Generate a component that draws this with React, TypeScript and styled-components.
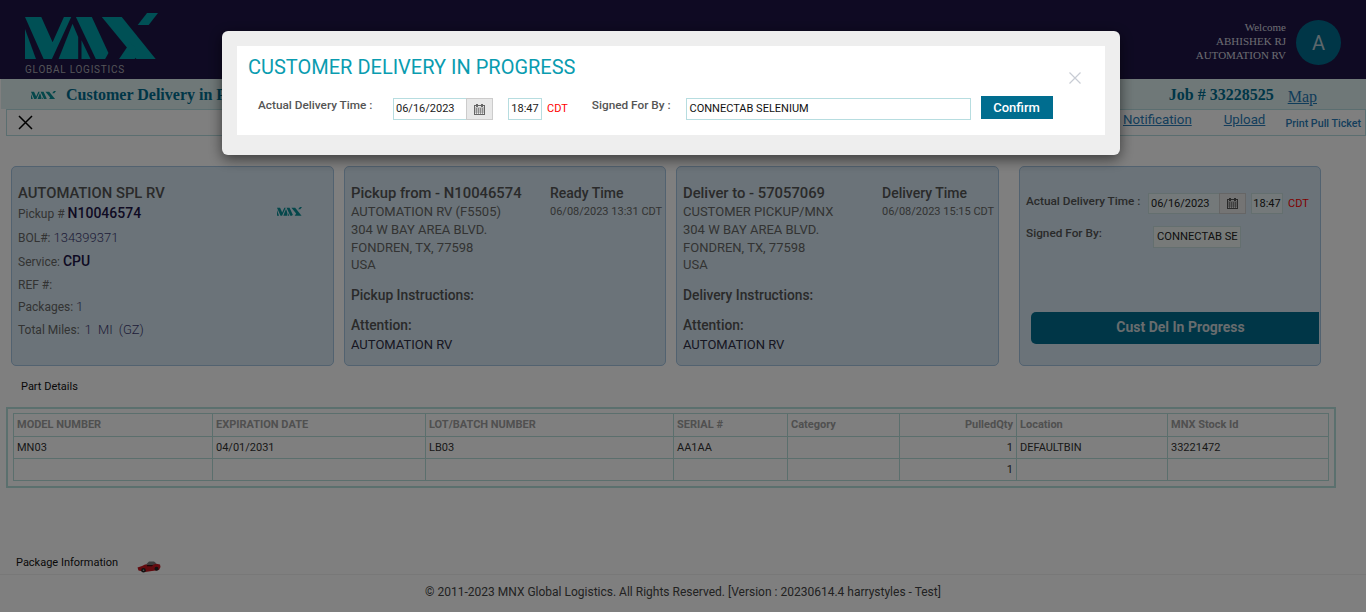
import styled, { createGlobalStyle } from "styled-components";

const GlobalStyle = createGlobalStyle`
  html, body {
    margin: 0;
    padding: 0;
    height: 100%;
    overflow: hidden;
    background: #fff;
    font-family: Roboto, "Liberation Sans", sans-serif;
  }
  * { box-sizing: border-box; }
`;

const Page = styled.div`
  width: 1366px;
  height: 612px;
  display: flex;
  flex-direction: column;
  overflow: hidden;
`;

const TopBar = styled.header`
  height: 79px;
  background: #1e1546;
  display: flex;
  flex: none;
`;

const LogoBox = styled.div`
  width: 240px;
  padding: 13px 0 0 25px;
`;

const LogoSub = styled.div`
  font-size: 10px;
  line-height: 10px;
  letter-spacing: 0.75px;
  color: #a8a8b0;
  margin-top: 5px;
`;

const Nav = styled.nav`
  width: 600px;
  display: flex;
  padding-top: 28px;
  gap: 40px;
  font-size: 15px;
  color: #ddd;
`;

const UserBox = styled.div`
  margin-left: auto;
  display: flex;
  align-items: center;
  padding: 0 25px 0 0;
  gap: 10px;
  height: 85px;
`;

const UserText = styled.div`
  text-align: right;
  font-family: "Liberation Serif", serif;
  font-size: 11px;
  line-height: 14px;
  color: #d8d8e0;
  margin-top: -4px;
`;

const Avatar = styled.div`
  width: 45px;
  height: 45px;
  border-radius: 50%;
  background: #006d8f;
  color: #b9cfd8;
  display: flex;
  align-items: center;
  justify-content: center;
  font-size: 20px;
`;

const TitleBar = styled.div`
  height: 30px;
  flex: none;
  margin-left: 1px;
  background: #dff0f0;
  display: flex;
  align-items: center;
  padding: 2px 49px 0 30px;
`;

const PageTitle = styled.div`
  font-family: "Liberation Serif", serif;
  font-weight: bold;
  font-size: 16px;
  color: #006d8f;
  margin-left: 10px;
`;

const JobNumber = styled.div`
  margin-left: auto;
  font-family: "Liberation Serif", serif;
  font-weight: bold;
  font-size: 16px;
  color: #006d8f;
`;

const MapLink = styled.a`
  margin-left: 14px;
  font-family: "Liberation Serif", serif;
  font-size: 16px;
  color: #1f78b4;
  text-decoration: underline;
  padding-top: 3px;
`;

const ActionBar = styled.div`
  height: 27px;
  flex: none;
  margin-left: 6px;
  border: 1px solid #b7dde0;
  display: flex;
  align-items: center;
  padding-left: 11px;
`;

const ActionLink = styled.a<{ $gap: number }>`
  margin-left: ${(p) => p.$gap}px;
  font-size: 13.3px;
  color: #2a7db8;
  text-decoration: underline;
  margin-top: -6px;
`;

const PrintLink = styled.a`
  margin-left: 20px;
  margin-top: 1px;
  font-size: 10.7px;
  font-weight: 500;
  color: #2a7db8;
`;

const CardRow = styled.div`
  display: flex;
  gap: 10px;
  padding: 30px 0 0 11px;
  flex: none;
`;

const Card = styled.section<{ $w: number; $ml?: number }>`
  width: ${(p) => p.$w}px;
  margin-left: ${(p) => p.$ml ?? 0}px;
  height: 200px;
  background: #d6e6f2;
  border: 1px solid #a4c4e0;
  border-radius: 5px;
  padding: 18px 5px 0 6px;
  color: #444;
  position: relative;
`;

const CardHead = styled.div`
  font-size: 14.8px;
  line-height: 17px;
  font-weight: 500;
  color: #555;
  margin-bottom: 1px;
`;

const TimeHead = styled.div`
  font-size: 14px;
  line-height: 17px;
  font-weight: 500;
  color: #555;
  margin-bottom: 1px;
`;

const InfoList = styled.div`
  padding-top: 3px;
`;

const InfoLine = styled.div<{ $mb?: number }>`
  font-size: 12px;
  line-height: 14px;
  margin-bottom: ${(p) => p.$mb ?? 9}px;
  color: #666;
`;

const Strong = styled.span`
  font-size: 14px;
  font-weight: 500;
  color: #1e1546;
`;

const Plain = styled.span`
  font-size: 13px;
  font-weight: 300;
  color: #3c3a70;
`;

const MilesValue = styled.span`
  font-size: 13px;
  font-weight: 300;
  color: #3c3a70;
  margin-left: 2px;
  word-spacing: 3px;
`;

const SmallLogo = styled.div`
  position: absolute;
  top: 40px;
  left: 265px;
  line-height: 0;
`;

const SplitRow = styled.div`
  display: flex;
`;

const AddressCol = styled.div`
  flex: 1;
`;

const TimeCol = styled.div<{ $w: number }>`
  width: ${(p) => p.$w}px;
`;

const AddressLine = styled.div`
  font-size: 13px;
  line-height: 17.8px;
  color: #666;
`;

const TimeValue = styled.div`
  font-size: 11px;
  line-height: 18px;
  color: #666;
  white-space: nowrap;
`;

const SubHead = styled.div<{ $mt: number }>`
  font-size: 13.8px;
  line-height: 16px;
  font-weight: 500;
  color: #555;
  margin-top: ${(p) => p.$mt}px;
`;

const DarkLine = styled.div`
  font-size: 13px;
  line-height: 18px;
  color: #2e2e44;
  margin-top: 3px;
`;

const FormRow = styled.div<{ $mt?: number }>`
  display: flex;
  align-items: flex-start;
  margin-top: ${(p) => p.$mt ?? 0}px;
`;

const FieldLabel = styled.label<{ $w?: number; $mt?: number }>`
  font-size: 11.8px;
  line-height: 14px;
  font-weight: 500;
  color: #555;
  white-space: nowrap;
  width: ${(p) => (p.$w ? `${p.$w}px` : "auto")};
  margin-top: ${(p) => p.$mt ?? 0}px;
`;

const DateField = styled.div<{ $border: string; $bg: string; $w: number; $h: number }>`
  width: ${(p) => p.$w}px;
  height: ${(p) => p.$h}px;
  border: 1px solid ${(p) => p.$border};
  display: flex;
  font-size: 11px;
  line-height: ${(p) => p.$h - 2}px;
  color: #222;
  background: ${(p) => p.$bg};
`;

const DateText = styled.span`
  flex: 1;
  padding-left: 2px;
`;

const DateIcon = styled.span`
  width: 27px;
  margin: -1px -1px -1px 0;
  background: #e8e8e8;
  border: 1px solid #ccc;
  display: flex;
  align-items: center;
  justify-content: center;
`;

const TimeField = styled.div<{ $border: string; $bg: string; $w: number; $h: number; $ml: number }>`
  width: ${(p) => p.$w}px;
  height: ${(p) => p.$h}px;
  margin-left: ${(p) => p.$ml}px;
  border: 1px solid ${(p) => p.$border};
  font-size: 11px;
  line-height: ${(p) => p.$h - 2}px;
  text-align: center;
  color: #222;
  background: ${(p) => p.$bg};
`;

const ZoneText = styled.span<{ $mr?: number }>`
  font-size: 11px;
  line-height: 22px;
  color: #f00;
  margin: 0 ${(p) => p.$mr ?? 0}px 0 5px;
`;

const SignedField = styled.div`
  width: 88px;
  height: 22px;
  border: 1px solid #c8dede;
  background: #eef4f2;
  font-size: 11.2px;
  line-height: 20px;
  padding-left: 3px;
  overflow: hidden;
  white-space: nowrap;
  color: #222;
`;

const StatusButton = styled.button`
  position: absolute;
  left: 11px;
  top: 145px;
  width: 288px;
  height: 32px;
  border: none;
  background: #006d8f;
  border-radius: 5px 0 0 5px;
  color: #d0d8dc;
  font-family: inherit;
  font-size: 14px;
  font-weight: 700;
  padding: 0 0 2px 11px;
`;

const SectionTitle = styled.div<{ $ml: number; $mt: number }>`
  font-size: 11px;
  line-height: 13px;
  color: #111;
  margin-left: ${(p) => p.$ml}px;
  margin-top: ${(p) => p.$mt}px;
`;

const TableWrap = styled.div`
  width: 1330px;
  height: 81px;
  margin: 14px 0 0 6px;
  border: 2px solid #b7e0dd;
  padding: 4px 5px;
  flex: none;
`;

const PartsTable = styled.table`
  width: 1315px;
  border-collapse: collapse;
  table-layout: fixed;
  font-size: 11px;
`;

const Th = styled.th<{ $right?: boolean }>`
  height: 23px;
  border: 1px solid #b7dedb;
  padding: 0 3px 2px;
  font-weight: 700;
  color: #a0a0a0;
  text-align: ${(p) => (p.$right ? "right" : "left")};
  white-space: nowrap;
`;

const Td = styled.td<{ $right?: boolean }>`
  height: 22px;
  border: 1px solid #b7dedb;
  padding: 0 3px;
  color: #333;
  text-align: ${(p) => (p.$right ? "right" : "left")};
`;

const PackageRow = styled.div`
  display: flex;
  align-items: flex-start;
  gap: 19px;
  margin: 68px 0 0 16px;
  flex: none;
`;

const PackageLabel = styled.div`
  font-size: 11px;
  color: #111;
`;

const CarSvg = styled.svg`
  margin-top: 4px;
`;

const Footer = styled.footer`
  margin-top: 1px;
  height: 38px;
  flex: none;
  border-top: 1px solid #f0f0f0;
  text-align: center;
  font-size: 12px;
  line-height: 34px;
  color: #444;
`;

const Backdrop = styled.div`
  position: fixed;
  inset: 0;
  background: rgba(0, 0, 0, 0.5);
`;

const Modal = styled.div`
  position: fixed;
  top: 31px;
  left: 222px;
  width: 898px;
  height: 124px;
  background: #eee;
  border-radius: 6px;
  padding: 15px;
  box-shadow: 0 4px 14px rgba(0, 0, 0, 0.55);
`;

const ModalBody = styled.div`
  position: relative;
  height: 89px;
  background: #fff;
  padding: 9px 0 0 11px;
`;

const ModalTitle = styled.h2`
  margin: 0;
  font-size: 20px;
  line-height: 24px;
  font-weight: 400;
  color: #0a9cb0;
`;

const ModalForm = styled.div`
  display: flex;
  align-items: flex-start;
  margin-top: 19px;
  padding-left: 10px;
`;

const SignedInput = styled.div`
  width: 285px;
  height: 22px;
  border: 1px solid #b7dde0;
  font-size: 11px;
  line-height: 20px;
  padding-left: 3px;
  color: #111;
  margin: 0 10px 0 15px;
`;

const ConfirmButton = styled.button`
  width: 72px;
  height: 23px;
  margin-top: -2px;
  border: none;
  background: #006d8f;
  color: #fff;
  font-family: inherit;
  font-size: 13px;
  font-weight: 500;
  padding: 0;
`;

const CloseButton = styled.button`
  position: absolute;
  top: 26px;
  right: 24px;
  background: none;
  border: none;
  padding: 0;
  display: flex;
`;

// MNX mark, traced in the coordinates of the zoomed logo
const MnxLogo = ({ width, fill }: { width: number; fill: string }) => (
  <svg width={width} height={(width * 140) / 400} viewBox="75 40 400 140" style={{ display: "block" }}>
    <g fill={fill}>
      <path d="M75 88L108 178H75Z" />
      <path d="M75 52H124L158 128L192 52H214L156 178H131Z" />
      <path d="M218 72L235 112V178H176Z" />
      <path d="M228 52H276L326 160L316 178H288Z" />
      <path d="M245 122L272 178H245Z" />
      <path d="M306 52H366L468 178H410Z" />
      <path d="M358 178L392 128L418 160L405 178Z" />
      <path d="M414 76L442 40H475L447 76Z" />
    </g>
  </svg>
);

const CalendarIcon = ({ color }: { color: string }) => (
  <svg width="11" height="11" viewBox="0 0 11 11">
    <rect x="0.5" y="1.5" width="10" height="9" fill="none" stroke={color} />
    <path d="M0 4h11M0 6h11M0 8h11M2.5 4v6M4.5 4v6M6.5 4v6M8.5 4v6" stroke={color} strokeWidth="0.6" />
    <rect x="2" y="0" width="2" height="3" fill={color} />
    <rect x="7" y="0" width="2" height="3" fill={color} />
  </svg>
);

const CarIcon = () => (
  <CarSvg width="24" height="13" viewBox="0 0 24 13">
    <path fill="#c4161e" d="M0.5 7.5L5 6l3-1.5 6-.5 4-.5 5 1 .5 2.5-1.5 3-14 2-6.5-1.5z" />
    <path fill="#7a7a7a" d="M9 4.5L12 1.5h5l2.5 2-4 1.5-2 0z" />
    <path fill="#3a1014" d="M10 5h6l-1 1.2h-5z" />
    <circle cx="6.5" cy="10.2" r="2.3" fill="#222" />
    <circle cx="19.5" cy="8.8" r="2" fill="#222" />
    <circle cx="6.5" cy="10.2" r="0.8" fill="#aaa" />
  </CarSvg>
);

const columns = [
  { name: "MODEL NUMBER", w: 199 },
  { name: "EXPIRATION DATE", w: 213 },
  { name: "LOT/BATCH NUMBER", w: 248 },
  { name: "SERIAL #", w: 114 },
  { name: "Category", w: 112 },
  { name: "PulledQty", w: 117, right: true },
  { name: "Location", w: 151 },
  { name: "MNX Stock Id", w: 161 },
];

const rows = [
  ["MN03", "04/01/2031", "LB03", "AA1AA", "", "1", "DEFAULTBIN", "33221472"],
  ["", "", "", "", "", "1", "", ""],
];

const App = () => {
  return (
    <>
      <GlobalStyle />
      <Page>
        <TopBar>
          <LogoBox>
            <MnxLogo width={133} fill="#00a0aa" />
            <LogoSub>GLOBAL LOGISTICS</LogoSub>
          </LogoBox>
          <Nav>
            <span>Operations</span>
            <span>Accounting</span>
            <span>Reports</span>
            <span>Admin</span>
            <span>Tools</span>
            <span>Help</span>
          </Nav>
          <UserBox>
            <UserText>
              Welcome
              <br />
              ABHISHEK RJ
              <br />
              AUTOMATION RV
            </UserText>
            <Avatar>A</Avatar>
          </UserBox>
        </TopBar>

        <TitleBar>
          <MnxLogo width={25} fill="#0a8f96" />
          <PageTitle>Customer Delivery in Progress</PageTitle>
          <JobNumber>Job # 33228525</JobNumber>
          <MapLink>Map</MapLink>
        </TitleBar>

        <ActionBar>
          <svg width="15" height="15" viewBox="0 0 15 15">
            <path d="M1 1l13 13M14 1L1 14" stroke="#000" strokeWidth="1.5" />
          </svg>
          <ActionLink $gap={1090}>Notification</ActionLink>
          <ActionLink $gap={32}>Upload</ActionLink>
          <PrintLink>Print Pull Ticket</PrintLink>
        </ActionBar>

        <CardRow>
          <Card $w={323}>
            <CardHead>AUTOMATION SPL RV</CardHead>
            <InfoList>
              <InfoLine $mb={10}>
                Pickup # <Strong>N10046574</Strong>
              </InfoLine>
              <InfoLine>
                BOL#: <Plain>134399371</Plain>
              </InfoLine>
              <InfoLine>
                Service: <Strong>CPU</Strong>
              </InfoLine>
              <InfoLine $mb={8}>REF #:</InfoLine>
              <InfoLine>
                Packages: <Plain>1</Plain>
              </InfoLine>
              <InfoLine>
                Total Miles: <MilesValue>1 MI (GZ)</MilesValue>
              </InfoLine>
            </InfoList>
            <SmallLogo>
              <MnxLogo width={25} fill="#0a8f96" />
            </SmallLogo>
          </Card>

          <Card $w={322}>
            <SplitRow>
              <AddressCol>
                <CardHead>Pickup from - N10046574</CardHead>
                <AddressLine>AUTOMATION RV (F5505)</AddressLine>
                <AddressLine>304 W BAY AREA BLVD.</AddressLine>
                <AddressLine>FONDREN, TX, 77598</AddressLine>
                <AddressLine>USA</AddressLine>
              </AddressCol>
              <TimeCol $w={110}>
                <TimeHead>Ready Time</TimeHead>
                <TimeValue>06/08/2023 13:31 CDT</TimeValue>
              </TimeCol>
            </SplitRow>
            <SubHead $mt={13}>Pickup Instructions:</SubHead>
            <SubHead $mt={14}>Attention:</SubHead>
            <DarkLine>AUTOMATION RV</DarkLine>
          </Card>

          <Card $w={323}>
            <SplitRow>
              <AddressCol>
                <CardHead>Deliver to - 57057069</CardHead>
                <AddressLine>CUSTOMER PICKUP/MNX</AddressLine>
                <AddressLine>304 W BAY AREA BLVD.</AddressLine>
                <AddressLine>FONDREN, TX, 77598</AddressLine>
                <AddressLine>USA</AddressLine>
              </AddressCol>
              <TimeCol $w={111}>
                <TimeHead>Delivery Time</TimeHead>
                <TimeValue>06/08/2023 15:15 CDT</TimeValue>
              </TimeCol>
            </SplitRow>
            <SubHead $mt={13}>Delivery Instructions:</SubHead>
            <SubHead $mt={14}>Attention:</SubHead>
            <DarkLine>AUTOMATION RV</DarkLine>
          </Card>

          <Card $w={302} $ml={10}>
            <FormRow $mt={8}>
              <FieldLabel $w={122} $mt={1}>
                Actual Delivery Time :
              </FieldLabel>
              <DateField $border="#c8dede" $bg="#e8f2f4" $w={98} $h={21}>
                <DateText>06/16/2023</DateText>
                <DateIcon>
                  <CalendarIcon color="#555" />
                </DateIcon>
              </DateField>
              <TimeField $border="#c8dede" $bg="#e8f2f4" $w={32} $h={21} $ml={5}>
                18:47
              </TimeField>
              <ZoneText>CDT</ZoneText>
            </FormRow>
            <FormRow $mt={11}>
              <FieldLabel $w={127}>Signed For By:</FieldLabel>
              <SignedField>CONNECTAB SE</SignedField>
            </FormRow>
            <StatusButton>Cust Del In Progress</StatusButton>
          </Card>
        </CardRow>

        <SectionTitle $ml={21} $mt={14}>
          Part Details
        </SectionTitle>

        <TableWrap>
          <PartsTable>
            <colgroup>
              {columns.map((col) => (
                <col key={col.name} width={col.w} />
              ))}
            </colgroup>
            <thead>
              <tr>
                {columns.map((col) => (
                  <Th key={col.name} $right={col.right}>
                    {col.name}
                  </Th>
                ))}
              </tr>
            </thead>
            <tbody>
              {rows.map((row, i) => (
                <tr key={i}>
                  {row.map((cell, j) => (
                    <Td key={j} $right={columns[j].right}>
                      {cell}
                    </Td>
                  ))}
                </tr>
              ))}
            </tbody>
          </PartsTable>
        </TableWrap>

        <PackageRow>
          <PackageLabel>Package Information</PackageLabel>
          <CarIcon />
        </PackageRow>

        <Footer>© 2011-2023 MNX Global Logistics. All Rights Reserved. [Version : 20230614.4 harrystyles - Test]</Footer>
      </Page>

      <Backdrop />

      <Modal>
        <ModalBody>
          <ModalTitle>CUSTOMER DELIVERY IN PROGRESS</ModalTitle>
          <ModalForm>
            <FieldLabel $w={135}>Actual Delivery Time :</FieldLabel>
            <DateField $border="#b7dde0" $bg="#fff" $w={100} $h={22}>
              <DateText>06/16/2023</DateText>
              <DateIcon>
                <CalendarIcon color="#666" />
              </DateIcon>
            </DateField>
            <TimeField $border="#b7dde0" $bg="#fff" $w={34} $h={22} $ml={15}>
              18:47
            </TimeField>
            <ZoneText $mr={24}>CDT</ZoneText>
            <FieldLabel>Signed For By :</FieldLabel>
            <SignedInput>CONNECTAB SELENIUM</SignedInput>
            <ConfirmButton>Confirm</ConfirmButton>
          </ModalForm>
          <CloseButton>
            <svg width="12" height="12" viewBox="0 0 12 12">
              <path d="M0.5 0.5l11 11M11.5 0.5l-11 11" stroke="#c8ccd4" strokeWidth="1.2" />
            </svg>
          </CloseButton>
        </ModalBody>
      </Modal>
    </>
  );
};

export default App;
